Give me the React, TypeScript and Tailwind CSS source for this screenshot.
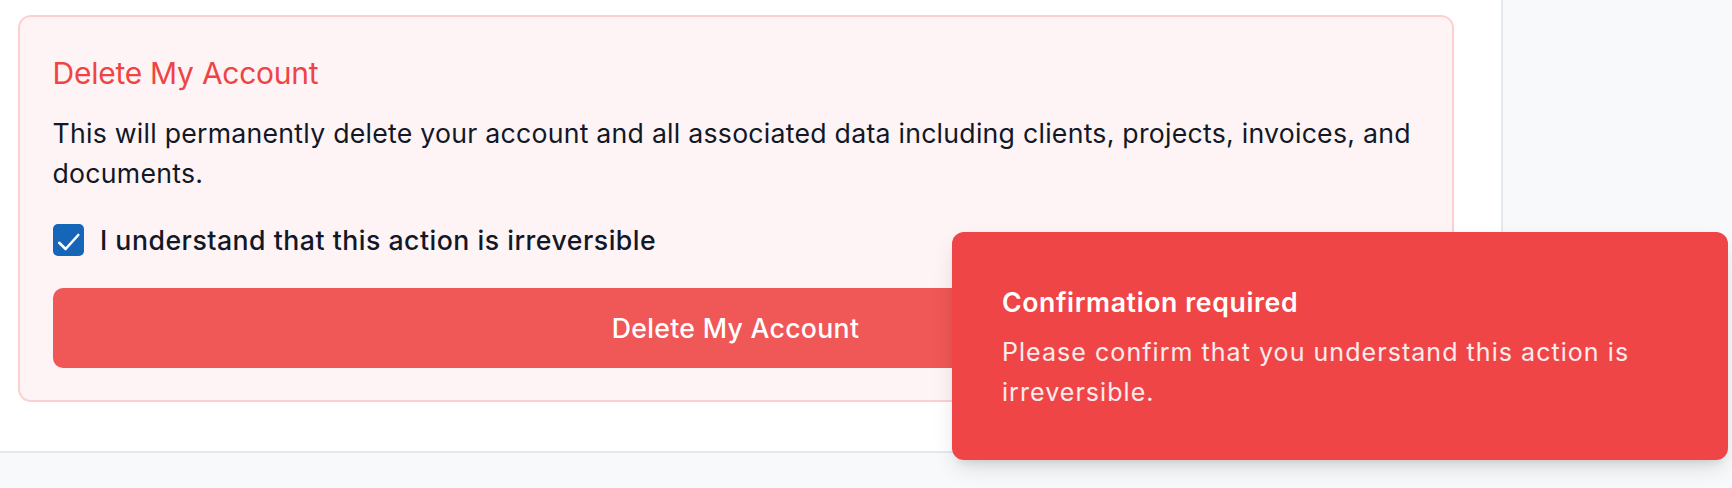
import React from "react";

export default function App() {
  return (
    <div className="relative h-[488px] w-full overflow-hidden bg-[#f8f9fb] font-['Inter',sans-serif]">
      <div className="w-[1503px] border-r-2 border-b-2 border-[#e4e8ef] bg-white pl-[17.5px] pt-[14.5px] pb-[48.5px]">
        <div className="w-[1436px] rounded-[13px] border-2 border-[#fdd0d0] bg-[#fef4f5] px-[33px] pt-[33px] pb-[32px]">
          <h3 className="text-[30px] leading-[46.67px] font-normal tracking-[-0.25px] text-[#ef4444]">Delete My Account</h3>
          <p className="mt-[16.7px] text-[26.67px] leading-[40px] tracking-[0.25px] text-[#111827]">
            This will permanently delete your account and all associated data including clients, projects, invoices, and documents.
          </p>
          <label className="mt-[27px] flex h-[40px] items-center gap-[16px]">
            <span className="flex h-[31.5px] w-[31.5px] items-center justify-center rounded-[5px] bg-[#1565b8]">
              <svg width="31.5" height="31.5" viewBox="0 0 31.5 31.5" fill="none">
                <polyline points="6.2,18.8 12.6,25 25.3,11" stroke="white" strokeWidth="2.6" strokeLinecap="round" strokeLinejoin="round" />
              </svg>
            </span>
            <span className="text-[26.67px] leading-[40px] font-medium tracking-[0.5px] text-[#111827]">
              I understand that this action is irreversible
            </span>
          </label>
          <button className="mt-[28.4px] flex h-[80px] w-full items-center justify-center rounded-[10px] bg-[#f05757] text-[26.67px] font-medium tracking-[0.3px] text-white">
            Delete My Account
          </button>
        </div>
      </div>

      <div className="absolute left-[952px] top-[232px] w-[776px] rounded-[12px] bg-[#ef4547] pl-[50px] pr-[40px] pt-[50px] pb-[48px] shadow-[0_10px_25px_-5px_rgba(0,0,0,0.15),0_8px_10px_-6px_rgba(0,0,0,0.1)]">
        <div className="text-[26.67px] leading-[40px] font-semibold tracking-[0.6px] text-white">Confirmation required</div>
        <div className="mt-[9.5px] text-[25px] leading-[40px] tracking-[1.05px] text-white/90">
          Please confirm that you understand this action is
          <br />
          irreversible.
        </div>
      </div>
    </div>
  );
}
